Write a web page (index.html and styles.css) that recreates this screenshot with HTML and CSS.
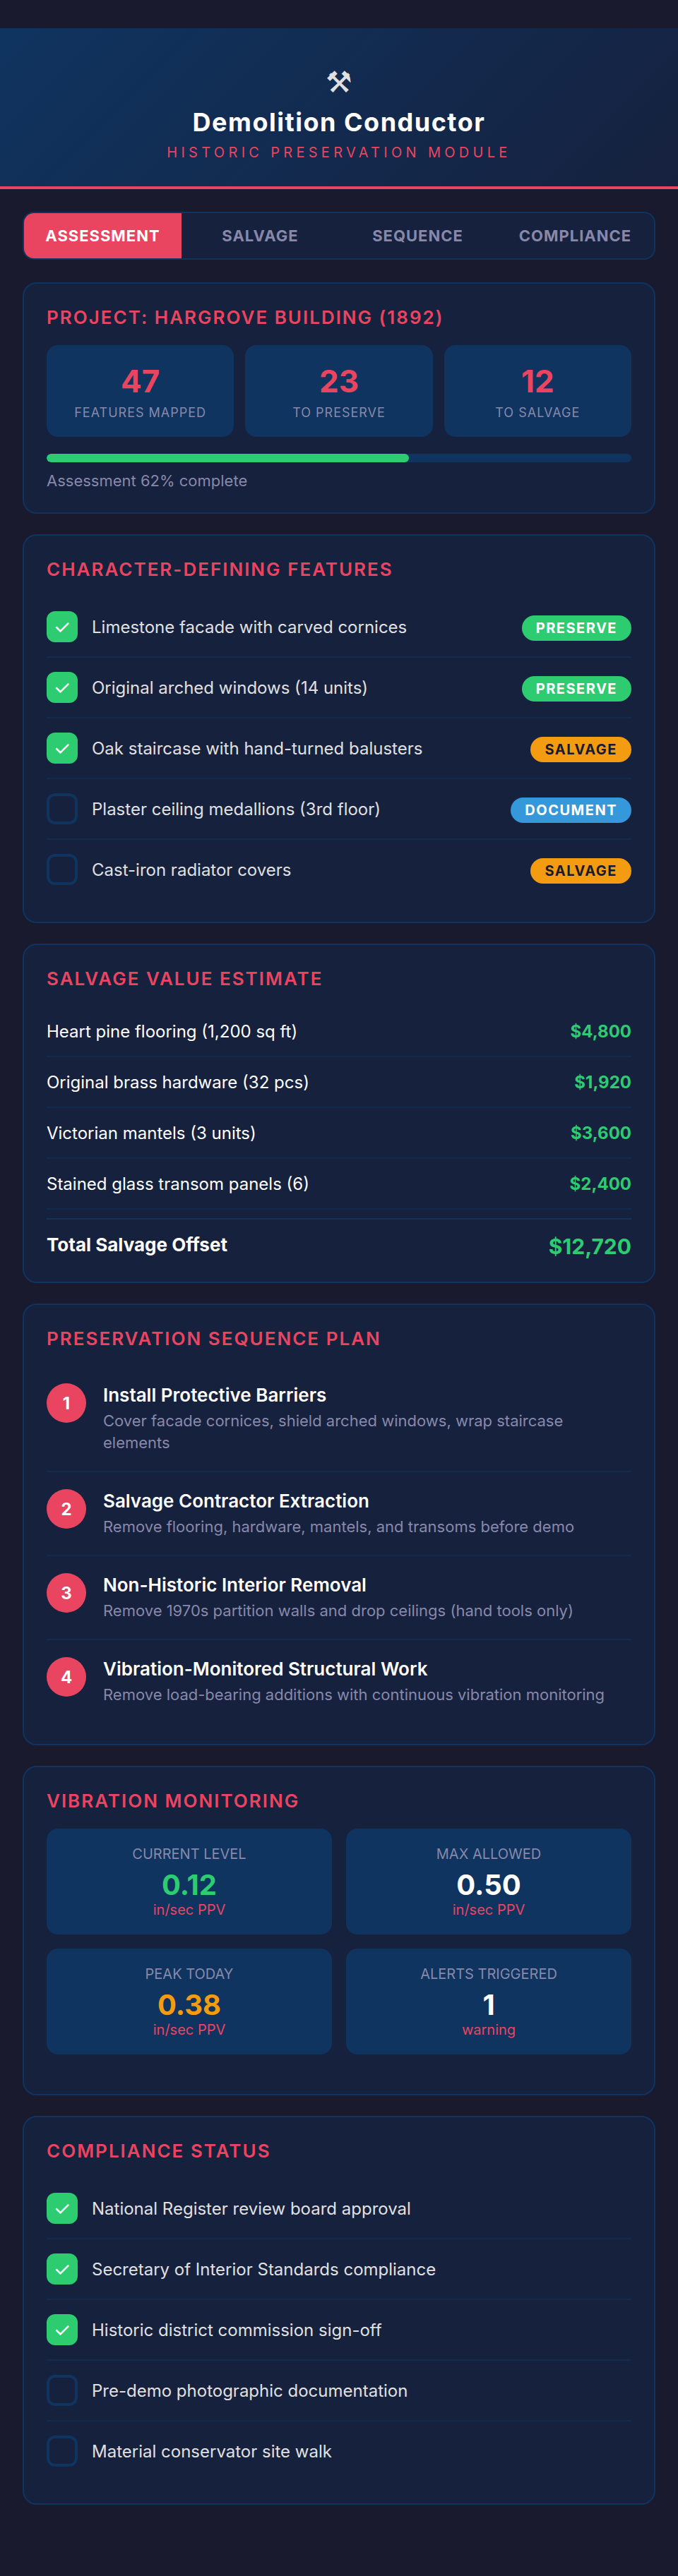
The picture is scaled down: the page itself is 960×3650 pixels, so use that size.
FILE: index.html
```html
<!DOCTYPE html>
<html lang="en">
<head>
    <meta charset="UTF-8">
    <title>Demolition Conductor</title>
    <link rel="stylesheet" href="styles.css">
</head>
<body>
    <div class="header">
        <div class="logo">⚒</div>
        <h1>Demolition Conductor</h1>
        <div class="subtitle">Historic Preservation Module</div>
    </div>

    <div class="container">
        <div class="tabs">
            <div class="tab active">Assessment</div>
            <div class="tab">Salvage</div>
            <div class="tab">Sequence</div>
            <div class="tab">Compliance</div>
        </div>

        <div class="card">
            <h2>Project: Hargrove Building (1892)</h2>
            <div class="stats">
                <div class="stat">
                    <div class="stat-value">47</div>
                    <div class="stat-label">Features Mapped</div>
                </div>
                <div class="stat">
                    <div class="stat-value">23</div>
                    <div class="stat-label">To Preserve</div>
                </div>
                <div class="stat">
                    <div class="stat-value">12</div>
                    <div class="stat-label">To Salvage</div>
                </div>
            </div>
            <div class="progress"><div class="progress-fill" style="width: 62%"></div></div>
            <div class="progress-text">Assessment 62% complete</div>
        </div>

        <div class="card">
            <h2>Character-Defining Features</h2>
            <div class="check-row">
                <div class="box done">✓</div>
                <div class="check-text">Limestone facade with carved cornices</div>
                <span class="tag preserve">Preserve</span>
            </div>
            <div class="check-row">
                <div class="box done">✓</div>
                <div class="check-text">Original arched windows (14 units)</div>
                <span class="tag preserve">Preserve</span>
            </div>
            <div class="check-row">
                <div class="box done">✓</div>
                <div class="check-text">Oak staircase with hand-turned balusters</div>
                <span class="tag salvage">Salvage</span>
            </div>
            <div class="check-row">
                <div class="box"></div>
                <div class="check-text">Plaster ceiling medallions (3rd floor)</div>
                <span class="tag document">Document</span>
            </div>
            <div class="check-row">
                <div class="box"></div>
                <div class="check-text">Cast-iron radiator covers</div>
                <span class="tag salvage">Salvage</span>
            </div>
        </div>

        <div class="card">
            <h2>Salvage Value Estimate</h2>
            <div class="value-row"><span>Heart pine flooring (1,200 sq ft)</span><span class="amount">$4,800</span></div>
            <div class="value-row"><span>Original brass hardware (32 pcs)</span><span class="amount">$1,920</span></div>
            <div class="value-row"><span>Victorian mantels (3 units)</span><span class="amount">$3,600</span></div>
            <div class="value-row"><span>Stained glass transom panels (6)</span><span class="amount">$2,400</span></div>
            <div class="value-total"><span>Total Salvage Offset</span><span class="amount">$12,720</span></div>
        </div>

        <div class="card">
            <h2>Preservation Sequence Plan</h2>
            <div class="step">
                <div class="step-num">1</div>
                <div>
                    <div class="step-title">Install Protective Barriers</div>
                    <div class="step-desc">Cover facade cornices, shield arched windows, wrap staircase elements</div>
                </div>
            </div>
            <div class="step">
                <div class="step-num">2</div>
                <div>
                    <div class="step-title">Salvage Contractor Extraction</div>
                    <div class="step-desc">Remove flooring, hardware, mantels, and transoms before demo</div>
                </div>
            </div>
            <div class="step">
                <div class="step-num">3</div>
                <div>
                    <div class="step-title">Non-Historic Interior Removal</div>
                    <div class="step-desc">Remove 1970s partition walls and drop ceilings (hand tools only)</div>
                </div>
            </div>
            <div class="step">
                <div class="step-num">4</div>
                <div>
                    <div class="step-title">Vibration-Monitored Structural Work</div>
                    <div class="step-desc">Remove load-bearing additions with continuous vibration monitoring</div>
                </div>
            </div>
        </div>

        <div class="card">
            <h2>Vibration Monitoring</h2>
            <div class="meters">
                <div class="meter">
                    <div class="meter-label">Current Level</div>
                    <div class="meter-value green">0.12</div>
                    <div class="meter-unit">in/sec PPV</div>
                </div>
                <div class="meter">
                    <div class="meter-label">Max Allowed</div>
                    <div class="meter-value">0.50</div>
                    <div class="meter-unit">in/sec PPV</div>
                </div>
                <div class="meter">
                    <div class="meter-label">Peak Today</div>
                    <div class="meter-value orange">0.38</div>
                    <div class="meter-unit">in/sec PPV</div>
                </div>
                <div class="meter">
                    <div class="meter-label">Alerts Triggered</div>
                    <div class="meter-value">1</div>
                    <div class="meter-unit">warning</div>
                </div>
            </div>
        </div>

        <div class="card">
            <h2>Compliance Status</h2>
            <div class="check-row">
                <div class="box done">✓</div>
                <div class="check-text">National Register review board approval</div>
            </div>
            <div class="check-row">
                <div class="box done">✓</div>
                <div class="check-text">Secretary of Interior Standards compliance</div>
            </div>
            <div class="check-row">
                <div class="box done">✓</div>
                <div class="check-text">Historic district commission sign-off</div>
            </div>
            <div class="check-row">
                <div class="box"></div>
                <div class="check-text">Pre-demo photographic documentation</div>
            </div>
            <div class="check-row">
                <div class="box"></div>
                <div class="check-text">Material conservator site walk</div>
            </div>
        </div>
    </div>
</body>
</html>
```

FILE: styles.css
```css
* {
    box-sizing: border-box;
}

body {
    font-family: Inter, "Liberation Sans", sans-serif;
    background-color: #1a1a2e;
    color: #e0e0e0;
    margin: 0;
    padding-top: 40px;
}

.header {
    height: 228px;
    padding-top: 52px;
    text-align: center;
    background: linear-gradient(135deg, #0f3460, #16213e);
    border-bottom: 4px solid #e94560;
}

.logo {
    font-size: 42px;
    line-height: 48px;
}

h1 {
    margin: 11px 0 9px;
    font-size: 36px;
    line-height: 44px;
    font-weight: 700;
    letter-spacing: 1.5px;
    color: #fff;
}

.subtitle {
    font-size: 20px;
    line-height: 24px;
    letter-spacing: 5.3px;
    text-transform: uppercase;
    color: #e94560;
}

.container {
    padding: 32px;
}

.tabs {
    display: flex;
    height: 68px;
    margin-bottom: 32px;
    background: #16213e;
    border: 2px solid #0f3460;
    border-radius: 16px;
    overflow: hidden;
}

.tab {
    flex: 1;
    display: flex;
    align-items: center;
    justify-content: center;
    font-size: 22px;
    font-weight: 700;
    letter-spacing: 1px;
    text-transform: uppercase;
    color: #8888aa;
}

.tab.active {
    background: #e94560;
    color: #fff;
}

.card {
    background: #16213e;
    border: 2px solid #0f3460;
    border-radius: 20px;
    padding: 32px;
    margin-bottom: 29px;
}

h2 {
    margin: 0 0 24px;
    font-size: 26px;
    font-weight: 600;
    letter-spacing: 2px;
    text-transform: uppercase;
    color: #e94560;
}

.stats {
    display: grid;
    grid-template-columns: repeat(3, 1fr);
    gap: 16px;
}

.stat {
    height: 130px;
    padding-top: 24px;
    text-align: center;
    background: #0f3460;
    border-radius: 16px;
}

.stat-value {
    font-size: 44px;
    font-weight: 700;
    color: #e94560;
}

.stat-label {
    margin-top: 7px;
    font-size: 18px;
    letter-spacing: 1px;
    text-transform: uppercase;
    color: #8888aa;
}

.progress {
    height: 12px;
    margin-top: 24px;
    background: #0f3460;
    border-radius: 6px;
    overflow: hidden;
}

.progress-fill {
    height: 100%;
    background: #2ecc71;
    border-radius: 6px;
}

.progress-text {
    margin-top: 13px;
    font-size: 22px;
    color: #8888aa;
}

.check-row {
    display: flex;
    align-items: center;
    gap: 20px;
    padding: 20px 0;
    border-bottom: 2px solid rgba(15, 52, 96, 0.5);
}

.check-row:last-child {
    border-bottom: none;
}

.box {
    flex: none;
    display: flex;
    align-items: center;
    justify-content: center;
    width: 44px;
    height: 44px;
    border: 4px solid #0f3460;
    border-radius: 12px;
    font-size: 28px;
    color: #fff;
}

.box.done {
    background: #2ecc71;
    border-color: #2ecc71;
}

.check-text {
    flex: 1;
    font-size: 24px;
}

.tag {
    margin-top: 4px;
    padding: 4px 20px;
    border-radius: 20px;
    font-size: 20px;
    line-height: 28px;
    font-weight: 700;
    letter-spacing: 1.5px;
    text-transform: uppercase;
    color: #fff;
}

.tag.preserve {
    background: #2ecc71;
}

.tag.salvage {
    background: #f39c12;
    color: #1a1a2e;
}

.tag.document {
    background: #3498db;
}

.value-row {
    display: flex;
    justify-content: space-between;
    align-items: center;
    height: 72px;
    font-size: 24px;
    color: #fff;
    border-bottom: 2px solid rgba(15, 52, 96, 0.5);
}

.amount {
    font-weight: 700;
    color: #2ecc71;
}

.value-total {
    display: flex;
    justify-content: space-between;
    margin-top: 12px;
    padding-top: 20px;
    border-top: 2px solid #0f3460;
    font-size: 26px;
    font-weight: 700;
    color: #fff;
}

.value-total .amount {
    font-size: 30px;
}

.step {
    display: flex;
    gap: 24px;
    padding: 24px 0;
    border-bottom: 2px solid rgba(15, 52, 96, 0.5);
}

.step:last-child {
    border-bottom: none;
    padding-bottom: 22px;
}

.step-num {
    flex: none;
    display: flex;
    align-items: center;
    justify-content: center;
    width: 56px;
    height: 56px;
    border-radius: 50%;
    background: #e94560;
    color: #fff;
    font-size: 24px;
    font-weight: 700;
}

.step-title {
    font-size: 26px;
    line-height: 34px;
    font-weight: 600;
    color: #fff;
}

.step-desc {
    margin-top: 4px;
    font-size: 22px;
    line-height: 31px;
    color: #8888aa;
}

.meters {
    display: grid;
    grid-template-columns: repeat(2, 1fr);
    gap: 20px;
    margin-bottom: 24px;
}

.meter {
    height: 150px;
    padding-top: 22px;
    text-align: center;
    background: #0f3460;
    border-radius: 16px;
}

.meter-label {
    font-size: 20px;
    line-height: 28px;
    text-transform: uppercase;
    color: #8888aa;
}

.meter-value {
    margin-top: 9px;
    font-size: 40px;
    line-height: 42px;
    font-weight: 700;
    color: #fff;
}

.meter-value.green {
    color: #2ecc71;
}

.meter-value.orange {
    color: #f39c12;
}

.meter-unit {
    font-size: 20px;
    line-height: 28px;
    color: #e94560;
}
```
